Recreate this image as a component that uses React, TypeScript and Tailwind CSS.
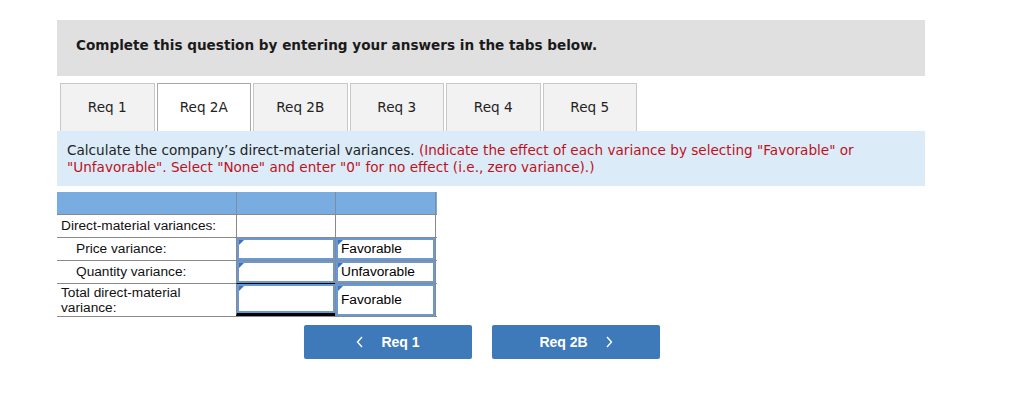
import React from 'react';

const tabs = ['Req 1', 'Req 2A', 'Req 2B', 'Req 3', 'Req 4', 'Req 5'];

function Flag() {
  return <span className="absolute left-0 top-0 w-0 h-0 border-t-[5px] border-t-[#3b73c0] border-r-[5px] border-r-transparent" />;
}

function InputCell({ text }: { text?: string }) {
  return (
    <div className="relative h-full border-2 border-[#6a98d2] bg-white flex items-center pl-[3px] text-black">
      <Flag />
      {text}
    </div>
  );
}

function App() {
  return (
    <div className="w-[1024px] h-[403px] bg-white relative" style={{ fontFamily: '"DejaVu Sans", Verdana, sans-serif' }}>
      <div className="pt-[20px] pl-[57px]">
        <div className="w-[868px] h-[56px] bg-[#e0e0e0] pl-[19px] pt-[13px]">
          <span className="text-[13.6px] leading-[18px] font-bold text-[#1a1a1a]">Complete this question by entering your answers in the tabs below.</span>
        </div>

        <div className="flex gap-[2px] pl-[3px] mt-[7px] h-[48px]">
          {tabs.map((t) => (
            <div
              key={t}
              className={`w-[94.5px] h-full border border-b-0 flex items-center justify-center text-[13.6px] text-[#222] ${t === 'Req 2A' ? 'bg-white border-[#a8a8a8]' : 'bg-[#f2f2f2] border-[#c8c8c8]'}`}
            >
              {t}
            </div>
          ))}
        </div>

        <div className="w-[868px] h-[55px] bg-[#dcebf8] pl-[10px] pt-[11px] text-[13.6px] leading-[17px] text-[#222]">
          Calculate the company’s direct-material variances.{' '}
          <span className="text-[#c0111a]">
            (Indicate the effect of each variance by selecting "Favorable" or
            <br />
            "Unfavorable". Select "None" and enter "0" for no effect (i.e., zero variance).)
          </span>
        </div>

        <div className="mt-[6px] w-[380px] text-[13.7px] text-[#111]" style={{ fontFamily: '"Liberation Sans", Arial, sans-serif' }}>
          <div className="flex h-[22px] bg-[#79ade1]">
            <div className="w-[179px]" />
            <div className="w-[99px] border-l border-[#7c8ea6]" />
            <div className="w-[101px] border-l border-r border-[#7c8ea6]" />
          </div>
          <div className="flex h-[23px] border-t border-[#8a8a8a]">
            <div className="w-[179px] flex items-center pl-[4px] whitespace-nowrap">Direct-material variances:</div>
            <div className="w-[99px] border-l border-[#8a8a8a]" />
            <div className="w-[101px] border-l border-r border-[#8a8a8a]" />
          </div>
          <div className="flex h-[23px] border-t border-[#8a8a8a]">
            <div className="w-[179px] flex items-center pl-[19px]">Price variance:</div>
            <div className="w-[99px] border-l border-[#8a8a8a]"><InputCell /></div>
            <div className="w-[101px] border-l border-r border-[#8a8a8a]"><InputCell text="Favorable" /></div>
          </div>
          <div className="flex h-[23px] border-t border-[#8a8a8a]">
            <div className="w-[179px] flex items-center pl-[19px]">Quantity variance:</div>
            <div className="w-[99px] border-l border-[#8a8a8a]"><InputCell /></div>
            <div className="w-[101px] border-l border-r border-[#8a8a8a]"><InputCell text="Unfavorable" /></div>
          </div>
          <div className="flex h-[34px] border-t border-b border-[#8a8a8a]">
            <div className="w-[179px] flex flex-col justify-center pl-[4px] leading-[15px]">
              <span>Total direct-material</span>
              <span>variance:</span>
            </div>
            <div className="w-[99px] border-l border-[#8a8a8a] border-t border-t-black border-b-[3px] border-b-black -mt-px"><InputCell /></div>
            <div className="w-[101px] border-l border-r border-[#8a8a8a]"><InputCell text="Favorable" /></div>
          </div>
        </div>
      </div>

      <div className="flex gap-[20px] pl-[304px] mt-[8px]" style={{ fontFamily: '"Liberation Sans", Arial, sans-serif' }}>
        <button className="w-[168px] h-[34px] bg-[#3e79b9] rounded-[2px] flex items-center justify-center gap-[17px] text-white text-[14px] font-bold">
          <svg width="8" height="12" viewBox="0 0 8 12" fill="none" stroke="white" strokeWidth="1.4"><path d="M6 1 L1.5 6 L6 11" /></svg>
          <span>Req 1</span>
        </button>
        <button className="w-[168px] h-[34px] bg-[#3e79b9] rounded-[2px] flex items-center justify-center gap-[17px] text-white text-[14px] font-bold">
          <span>Req 2B</span>
          <svg width="8" height="12" viewBox="0 0 8 12" fill="none" stroke="white" strokeWidth="1.4"><path d="M2 1 L6.5 6 L2 11" /></svg>
        </button>
      </div>
    </div>
  );
}

export default App;
